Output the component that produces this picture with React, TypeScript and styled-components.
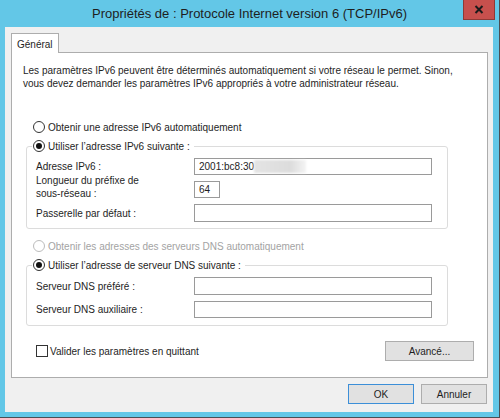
import React from "react";
import styled, { createGlobalStyle } from "styled-components";

const Global = createGlobalStyle`
  html, body { margin: 0; padding: 0; background: #ffffff; }
  body { font-family: "Liberation Sans", Arial, sans-serif; }
  * { box-sizing: border-box; }
`;

const Window = styled.div`
  width: 500px;
  height: 418px;
  background: #63c7e7;
  border-right: 1px solid #4a4f55;
  border-bottom: 1px solid #4a4f55;
  display: flex;
  flex-direction: column;
`;

const TitleBar = styled.div`
  height: 27px;
  display: grid;
  grid-template-columns: 1fr auto 1fr;
  align-items: start;
`;

const Title = styled.div`
  grid-column: 2;
  padding-top: 6px;
  font-size: 13px;
  line-height: 16px;
  color: #1e1e1e;
  white-space: nowrap;
`;

const CloseButton = styled.div`
  grid-column: 3;
  justify-self: end;
  margin-right: 4px;
  width: 32px;
  height: 20px;
  background: #c7504d;
  border: 1px solid #8e3a36;
  border-top: none;
  display: flex;
  align-items: center;
  justify-content: center;
`;

const Body = styled.div`
  flex: 1;
  margin: 0 6px 5px 5px;
  background: #f0f0f0;
  padding: 6px 5px 8px 6px;
  display: flex;
  flex-direction: column;
  font-size: 10px;
  line-height: 13px;
  color: #1e1e1e;
`;

const TabStrip = styled.div`
  display: flex;
  height: 19px;
  position: relative;
  z-index: 1;
`;

const Tab = styled.div`
  width: 48px;
  height: 20px;
  background: #ffffff;
  border: 1px solid #adadad;
  border-bottom: none;
  padding: 4px 0 0 5px;
`;

const Panel = styled.div`
  height: 326px;
  background: #ffffff;
  border: 1px solid #adadad;
  padding: 11px 0 0 11px;
  display: flex;
  flex-direction: column;
`;

const Description = styled.p`
  margin: 0;
  white-space: nowrap;
`;

const RadioRow = styled.span<{ $disabled?: boolean }>`
  display: flex;
  align-items: center;
  height: 16px;
  gap: 3px;
  color: ${(p) => (p.$disabled ? "#a3a3a3" : "#1e1e1e")};
  white-space: nowrap;
`;

const TopRadio = styled.div<{ $mt: number }>`
  margin-top: ${(p) => p.$mt}px;
  padding-left: 10px;
`;

const RadioCircle = styled.span<{ $checked?: boolean; $disabled?: boolean }>`
  width: 12px;
  height: 12px;
  border-radius: 50%;
  border: 1px solid ${(p) => (p.$disabled ? "#bcbcbc" : "#333333")};
  background: #ffffff;
  display: flex;
  align-items: center;
  justify-content: center;
  flex: none;
  &::after {
    content: "";
    display: ${(p) => (p.$checked ? "block" : "none")};
    width: 6px;
    height: 6px;
    border-radius: 50%;
    background: #111111;
  }
`;

const Group = styled.fieldset<{ $pb: number }>`
  margin: 3px 39px 0 3px;
  padding: 4px 0 ${(p) => p.$pb}px 0;
  border: 1px solid #dcdcdc;
  border-radius: 3px;
  min-width: 0;
`;

const Legend = styled.legend`
  padding: 0 4px 0 1px;
  margin-left: 5px;
`;

const FieldGrid = styled.div<{ $rows: string }>`
  display: grid;
  grid-template-columns: 158px auto;
  grid-template-rows: ${(p) => p.$rows};
  row-gap: 6px;
  align-items: center;
  padding-left: 9px;
`;

const FieldLabel = styled.div<{ $lift?: number }>`
  white-space: nowrap;
  margin-bottom: ${(p) => (p.$lift ? p.$lift * 2 : 0)}px;
`;

const Input = styled.div<{ $w: number }>`
  width: ${(p) => p.$w}px;
  height: 100%;
  border: 1px solid #9a9a9a;
  background: #ffffff;
  padding: 0 0 0 4px;
  display: flex;
  align-items: center;
  color: #1e1e1e;
`;

const Blur = styled.span`
  display: inline-block;
  width: 52px;
  height: 13px;
  background: linear-gradient(90deg, #e4e4e4, #dcdcdc 70%, #f4f4f4);
  filter: blur(1px);
`;

const BottomRow = styled.div`
  margin-top: 15px;
  display: flex;
  align-items: center;
  justify-content: space-between;
  padding: 0 13px 0 13px;
`;

const CheckRow = styled.span`
  display: flex;
  align-items: center;
  gap: 2px;
`;

const CheckBox = styled.span`
  width: 12px;
  height: 12px;
  border: 1px solid #333333;
  background: #ffffff;
  flex: none;
`;

const Button = styled.div<{ $w: number; $default?: boolean }>`
  width: ${(p) => p.$w}px;
  height: 20px;
  background: #e1e1e1;
  border: 1px solid ${(p) => (p.$default ? "#3c8fd8" : "#adadad")};
  display: flex;
  align-items: center;
  justify-content: center;
  color: #1e1e1e;
`;

const ButtonRow = styled.div`
  margin-top: 6px;
  display: flex;
  justify-content: flex-end;
  gap: 7px;
  padding-right: 1px;
`;

export default function App() {
  return (
    <>
      <Global />
      <Window>
        <TitleBar>
          <Title>Propriétés de : Protocole Internet version 6 (TCP/IPv6)</Title>
          <CloseButton>
            <svg width="10" height="9" viewBox="0 0 10 9">
              <path d="M1.5 1 L8.5 8 M8.5 1 L1.5 8" stroke="#1a1a1a" strokeWidth="2" />
            </svg>
          </CloseButton>
        </TitleBar>
        <Body>
          <TabStrip>
            <Tab>Général</Tab>
          </TabStrip>
          <Panel>
            <Description>
              Les paramètres IPv6 peuvent être déterminés automatiquement si votre réseau le permet. Sinon,
              <br />
              vous devez demander les paramètres IPv6 appropriés à votre administrateur réseau.
            </Description>
            <TopRadio $mt={29}>
              <RadioRow>
                <RadioCircle />
                Obtenir une adresse IPv6 automatiquement
              </RadioRow>
            </TopRadio>
            <Group $pb={6}>
              <Legend>
                <RadioRow>
                  <RadioCircle $checked />
                  Utiliser l’adresse IPv6 suivante :
                </RadioRow>
              </Legend>
              <FieldGrid $rows="17px 17px 18px">
                <FieldLabel>Adresse IPv6 :</FieldLabel>
                <Input $w={238}>
                  2001:bc8:30
                  <Blur />
                </Input>
                <FieldLabel $lift={3}>
                  Longueur du préfixe de
                  <br />
                  sous-réseau :
                </FieldLabel>
                <Input $w={26}>64</Input>
                <FieldLabel>Passerelle par défaut :</FieldLabel>
                <Input $w={238} />
              </FieldGrid>
            </Group>
            <TopRadio $mt={9}>
              <RadioRow $disabled>
                <RadioCircle $disabled />
                Obtenir les adresses des serveurs DNS automatiquement
              </RadioRow>
            </TopRadio>
            <Group $pb={7}>
              <Legend>
                <RadioRow>
                  <RadioCircle $checked />
                  Utiliser l’adresse de serveur DNS suivante :
                </RadioRow>
              </Legend>
              <FieldGrid $rows="18px 17px">
                <FieldLabel>Serveur DNS préféré :</FieldLabel>
                <Input $w={238} />
                <FieldLabel>Serveur DNS auxiliaire :</FieldLabel>
                <Input $w={238} />
              </FieldGrid>
            </Group>
            <BottomRow>
              <CheckRow>
                <CheckBox />
                Valider les paramètres en quittant
              </CheckRow>
              <Button $w={89}>Avancé...</Button>
            </BottomRow>
          </Panel>
          <ButtonRow>
            <Button $w={66} $default>OK</Button>
            <Button $w={66}>Annuler</Button>
          </ButtonRow>
        </Body>
      </Window>
    </>
  );
}
